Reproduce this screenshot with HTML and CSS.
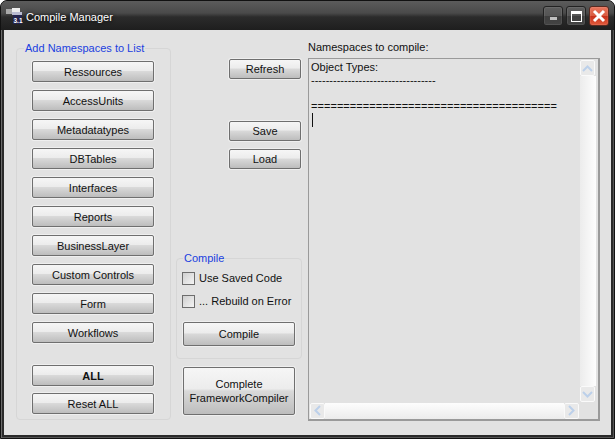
FILE: index.html
```html
<!DOCTYPE html>
<html lang="en">
<head>
<meta charset="utf-8">
<title>Compile Manager</title>
<link rel="stylesheet" href="styles.css">
</head>
<body>
<div class="window">
  <header class="titlebar">
    <svg class="app-icon" width="17" height="17" viewBox="0 0 17 17">
      <rect x="0" y="1" width="6" height="5" fill="#a8a8a8"/>
      <rect x="6" y="0" width="8" height="4" fill="#ececec"/>
      <rect x="6" y="4" width="10" height="3" fill="#b9bbd0"/>
      <rect x="7" y="7" width="9" height="9" fill="#24244e"/>
      <text x="7.5" y="15" class="app-icon-text">3.1</text>
    </svg>
    <span class="title">Compile Manager</span>
    <div class="caption-buttons">
      <div class="cap-btn"><span class="min-glyph"></span></div>
      <div class="cap-btn"><span class="max-glyph"></span></div>
      <div class="cap-btn cap-close">
        <svg width="14" height="14" viewBox="0 0 14 14"><path d="M2 2 L12 12 M12 2 L2 12" stroke="#fff" stroke-width="3" fill="none"/></svg>
      </div>
    </div>
  </header>
  <main class="client">
    <fieldset class="group group-list">
      <legend>Add Namespaces to List</legend>
      <div class="list-buttons">
        <button class="btn">Ressources</button>
        <button class="btn">AccessUnits</button>
        <button class="btn">Metadatatypes</button>
        <button class="btn">DBTables</button>
        <button class="btn">Interfaces</button>
        <button class="btn">Reports</button>
        <button class="btn">BusinessLayer</button>
        <button class="btn">Custom Controls</button>
        <button class="btn">Form</button>
        <button class="btn">Workflows</button>
      </div>
      <div class="all-buttons">
        <button class="btn btn-bold">ALL</button>
        <button class="btn">Reset ALL</button>
      </div>
    </fieldset>

    <div class="middle">
      <div class="mid-actions">
        <button class="btn btn-small">Refresh</button>
        <div class="save-load">
          <button class="btn btn-small">Save</button>
          <button class="btn btn-small">Load</button>
        </div>
      </div>
      <fieldset class="group group-compile">
        <legend>Compile</legend>
        <label class="check"><span class="box"></span>Use Saved Code</label>
        <label class="check"><span class="box"></span>... Rebuild on Error</label>
        <button class="btn btn-compile">Compile</button>
      </fieldset>
      <button class="btn btn-complete">Complete<br>FrameworkCompiler</button>
    </div>

    <section class="output">
      <div class="output-label">Namespaces to compile:</div>
      <div class="textbox">
        <div class="text-area">
          <div class="line">Object Types:</div>
          <div class="line">----------------------------------</div>
          <div class="line">&nbsp;</div>
          <div class="line line-eq">======================================</div>
          <div class="caret"></div>
        </div>
        <div class="vscroll">
          <div class="sb-btn"><svg width="11" height="7" viewBox="0 0 11 7"><path d="M1 6 L5.5 1.5 L10 6" stroke="#bcd0ea" stroke-width="2" fill="none"/></svg></div>
          <div class="sb-track"></div>
          <div class="sb-btn"><svg width="11" height="7" viewBox="0 0 11 7"><path d="M1 1 L5.5 5.5 L10 1" stroke="#bcd0ea" stroke-width="2" fill="none"/></svg></div>
        </div>
        <div class="hscroll">
          <div class="sb-btn"><svg width="7" height="11" viewBox="0 0 7 11"><path d="M6 1 L1.5 5.5 L6 10" stroke="#bcd0ea" stroke-width="2" fill="none"/></svg></div>
          <div class="sb-track"></div>
          <div class="sb-btn"><svg width="7" height="11" viewBox="0 0 7 11"><path d="M1 1 L5.5 5.5 L1 10" stroke="#bcd0ea" stroke-width="2" fill="none"/></svg></div>
        </div>
      </div>
    </section>
  </main>
</div>
</body>
</html>
```
FILE: styles.css
```css
* { box-sizing: border-box; }
html, body { margin: 0; padding: 0; }
body {
  width: 615px;
  height: 439px;
  overflow: hidden;
  background: #fff;
  font-family: "Liberation Sans", Arial, sans-serif;
  font-size: 11px;
  color: #111;
}
.window {
  width: 615px;
  height: 439px;
  display: flex;
  flex-direction: column;
  padding: 0 3px 3px 3px;
  background: #2a2a2a;
  border-radius: 7px 7px 0 0;
  border: 1px solid #111;
  box-shadow: inset 1px 1px 0 #6a6a6a, inset -1px -1px 0 #555;
}
.titlebar {
  height: 29px;
  flex: none;
  display: flex;
  align-items: center;
  margin: 0 -3px 0 -3px;
  padding: 0 3px 0 3px;
  border-radius: 6px 6px 0 0;
  background: linear-gradient(#5c5c5c 0, #4a4a4a 12px, #2b2b2b 16px, #1e1e1e 29px);
}
.app-icon { margin: 2px 0 0 2px; flex: none; }
.app-icon-text {
  font-family: "Liberation Sans", sans-serif;
  font-size: 6.5px;
  font-weight: bold;
  fill: #fff;
}
.title {
  margin-left: 3px;
  margin-top: 3px;
  color: #fff;
  font-size: 11px;
  text-shadow: 0 0 4px #000;
}
.caption-buttons {
  margin-left: auto;
  margin-top: 1px;
  display: flex;
  gap: 3px;
  margin-right: 2px;
}
.cap-btn {
  width: 20px;
  height: 20px;
  border: 1px solid #222;
  border-radius: 3px;
  background: linear-gradient(#5e5e5e, #545454 50%, #3e3e3e 50%, #444);
  display: flex;
  align-items: center;
  justify-content: center;
  box-shadow: inset 0 0 0 1px rgba(255,255,255,.08);
}
.min-glyph { width: 7px; height: 3px; background: #c0c0c0; margin-top: 5px; }
.max-glyph { width: 11px; height: 11px; border: 1px solid #fff; border-top-width: 3px; }
.cap-close {
  background: linear-gradient(#e8775f, #d95a3f 50%, #c8301a 50%, #e05a3c);
  border-color: #5a2a20;
}
.client {
  flex: 1;
  background: #e2e2e2;
  display: flex;
  align-items: flex-start;
  padding-left: 12px;
}
.btn {
  display: block;
  padding: 0;
  margin: 0;
  font: 11px "Liberation Sans", Arial, sans-serif;
  color: #111;
  border: 1px solid #6f6f6f;
  border-radius: 2px;
  background: linear-gradient(#f6f6f6, #ececec 45%, #d9d9d9 50%, #bdbdbd);
  box-shadow: 0 0 0 1px #efefef;
  text-align: center;
}
.group {
  margin: 0;
  padding: 0;
  border: 1px solid #d6d6d6;
  border-radius: 4px;
  min-width: 0;
}
.group legend {
  color: #1a3fe0;
  padding: 0 1px;
  font-size: 11px;
  line-height: 14px;
  white-space: nowrap;
}
.group-list {
  margin-top: 11px;
  width: 155px;
  height: 379px;
  padding: 6px 0 0 15px;
}
.group-list legend { margin-left: -8px; }
.list-buttons {
  display: flex;
  flex-direction: column;
  gap: 8px;
}
.list-buttons .btn, .all-buttons .btn { width: 122px; height: 21px; }
.all-buttons {
  margin-top: 22px;
  display: flex;
  flex-direction: column;
  gap: 7px;
}
.btn-bold { font-weight: bold; }
.middle {
  width: 126px;
  margin-left: 5px;
  margin-top: 29px;
  flex: none;
}
.mid-actions {
  height: 192px;
  display: flex;
  flex-direction: column;
  align-items: flex-end;
  padding-right: 1px;
}
.btn-small { width: 72px; height: 20px; }
.save-load {
  margin-top: 42px;
  display: flex;
  flex-direction: column;
  gap: 8px;
}
.group-compile {
  width: 126px;
  height: 108px;
  padding: 6px 0 0 5px;
}
.group-compile legend { margin-left: 1px; }
.check {
  display: flex;
  align-items: center;
  height: 14px;
  margin-bottom: 9px;
}
.box {
  width: 13px;
  height: 13px;
  border: 1px solid #6d6d6d;
  margin-right: 4px;
  background: linear-gradient(135deg, #cfcfcf, #f4f4f4);
  flex: none;
}
.btn-compile { width: 112px; height: 24px; margin: 14px 0 0 1px; }
.btn-complete { width: 112px; height: 48px; margin: 8px 0 0 7px; line-height: 14px; }
.output { margin-left: 6px; margin-top: 10px; width: 292px; }
.output-label { height: 18px; line-height: 14px; }
.textbox {
  width: 292px;
  height: 363px;
  border: 1px solid #9a9a9a;
  border-right-width: 2px;
  border-bottom-width: 2px;
  display: grid;
  grid-template-columns: 1fr 17px;
  grid-template-rows: 1fr 17px;
  padding: 1px 2px 0 1px;
}
.text-area { padding: 1px 0 0 1px; overflow: hidden; line-height: 13px; }
.line { height: 13px; white-space: nowrap; }
.line-eq { letter-spacing: .05px; }
.caret { width: 1px; height: 14px; background: #111; margin-left: 1px; }
.vscroll {
  display: flex;
  flex-direction: column;
  align-items: center;
}
.hscroll {
  grid-column: 1;
  grid-row: 2;
  display: flex;
  align-items: center;
}
.vscroll .sb-track {
  flex: 1;
  width: 16px;
  background: linear-gradient(90deg, #ececec, #fdfdfd);
}
.hscroll .sb-track {
  flex: 1;
  height: 16px;
  background: linear-gradient(#fdfdfd, #ececec);
}
.sb-btn {
  width: 15px;
  height: 16px;
  flex: none;
  display: flex;
  align-items: center;
  justify-content: center;
  background: #e9e9e9;
  border: 1px solid #fafafa;
  border-radius: 2px;
}
```
